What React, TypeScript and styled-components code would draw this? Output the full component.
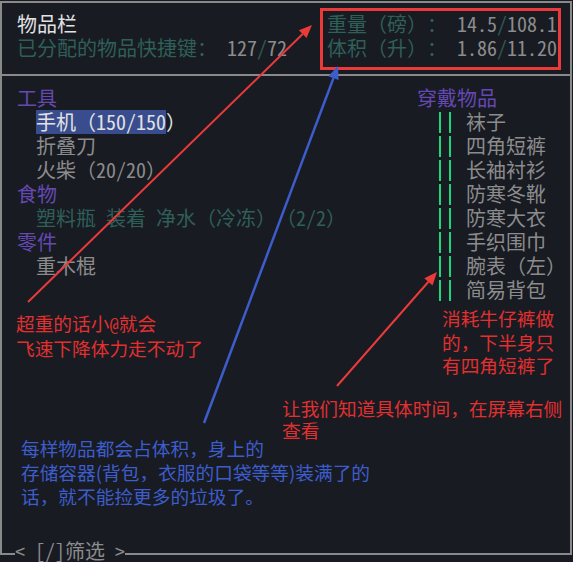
import React from "react";
import styled, { createGlobalStyle } from "styled-components";

const C = {
  bg: "#181b22",
  frame: "#8a8a8a",
  white: "#e2e2e2",
  gray: "#8c8c8c",
  teal: "#2f5f59",
  purple: "#6549b3",
  sel: "#394d8e",
  green: "#1ed679",
  red: "#ea3a3a",
  redText: "#e03030",
  blue: "#3d5dcc",
};

const Global = createGlobalStyle`
  html, body { margin: 0; padding: 0; background: ${C.bg}; }
  body {
    width: 573px; height: 562px; overflow: hidden;
    font-family: "Noto Sans CJK SC", "Noto Sans", sans-serif;
    text-spacing-trim: space-all;
  }
`;

const Screen = styled.div`
  position: relative;
  width: 573px;
  height: 562px;
  overflow: hidden;
  padding-top: 1px;
  box-sizing: border-box;
`;

const Frame = styled.div`
  position: relative;
  width: 572px;
  height: 554px;
  box-sizing: border-box;
  border: 2px solid ${C.frame};
  display: flex;
  flex-direction: column;
  font-size: 20px;
  line-height: 24px;
  color: ${C.gray};
`;

const Header = styled.header`
  display: flex;
  justify-content: space-between;
  align-items: flex-start;
  height: 73px;
  box-sizing: border-box;
  padding: 5px 9px 0 15px;
  border-bottom: 2px solid ${C.frame};
`;

const TitleBlock = styled.div`
  padding-top: 4px;
`;

const Line = styled.div<{ $c?: string }>`
  height: 24px;
  white-space: pre;
  color: ${(p) => p.$c ?? C.gray};
`;

const Num = styled.span<{ $c?: string }>`
  font-feature-settings: "hwid" 1;
  ${(p) => (p.$c ? `color: ${p.$c};` : "")}
`;

const Slash = styled.span`
  color: ${C.teal};
`;

const Label = styled.span`
  color: ${C.teal};
`;

const StatBox = styled.div`
  border: 3px solid ${C.red};
  padding: 1px 1px 7px 4px;
`;

const Body = styled.main`
  display: grid;
  grid-template-columns: 400px 1fr;
  padding: 10px 0 0 15px;
`;

const Column = styled.div`
  display: flex;
  flex-direction: column;
`;

const Category = styled.div`
  height: 24px;
  white-space: pre;
  color: ${C.purple};
`;

const Item = styled.div<{ $c?: string }>`
  height: 24px;
  white-space: pre;
  padding-left: 19px;
  color: ${(p) => p.$c ?? C.gray};
`;

const Sel = styled.span`
  display: inline-block;
  height: 24px;
  background: ${C.sel};
  color: ${C.white};
`;

const WearRow = styled.div`
  display: flex;
  align-items: flex-start;
  height: 24px;
  padding-left: 22px;
  white-space: pre;
`;

const Bar = styled.span`
  display: block;
  width: 2px;
  height: 21px;
  margin-top: 2px;
  margin-right: 8px;
  background: ${C.green};
  & + & {
    margin-right: 15px;
  }
`;

const Legend = styled.div`
  position: absolute;
  left: 13px;
  bottom: -10px;
  height: 24px;
  background: ${C.bg};
  white-space: pre;
  color: ${C.gray};
`;

const Note = styled.div<{ $x: number; $y: number; $lh: number; $c: string }>`
  position: absolute;
  left: ${(p) => p.$x}px;
  top: ${(p) => p.$y}px;
  font-size: 18.7px;
  line-height: ${(p) => p.$lh}px;
  color: ${(p) => p.$c};
  white-space: pre;
`;

const Overlay = styled.svg`
  position: absolute;
  left: 0;
  top: 0;
  pointer-events: none;
`;

type ArrowProps = { x1: number; y1: number; x2: number; y2: number; color: string; w?: number };

function Arrow({ x1, y1, x2, y2, color, w = 2 }: ArrowProps) {
  const dx = x2 - x1;
  const dy = y2 - y1;
  const len = Math.hypot(dx, dy);
  const ux = dx / len;
  const uy = dy / len;
  const L = 13;
  const H = 5.5;
  const bx = x2 - ux * L;
  const by = y2 - uy * L;
  const nx = -uy;
  const ny = ux;
  const pts = `${x2},${y2} ${bx + nx * H},${by + ny * H} ${bx - nx * H},${by - ny * H}`;
  return (
    <g>
      <line x1={x1} y1={y1} x2={bx} y2={by} stroke={color} strokeWidth={w} />
      <polygon points={pts} fill={color} />
    </g>
  );
}

const worn = ["袜子", "四角短裤", "长袖衬衫", "防寒冬靴", "防寒大衣", "手织围巾", "腕表（左）", "简易背包"];

export default function App() {
  return (
    <Screen>
      <Global />
      <Frame>
        <Header>
          <TitleBlock>
            <Line $c={C.white}>物品栏</Line>
            <Line>
              <Label>已分配的物品快捷键：</Label>
              <Num> 127<Slash>/</Slash>72</Num>
            </Line>
          </TitleBlock>
          <StatBox>
            <Line>
              <Label>重量（磅）：</Label>
              <Num> 14.5<Slash>/</Slash>108.1</Num>
            </Line>
            <Line>
              <Label>体积（升）：</Label>
              <Num> 1.86<Slash>/</Slash>11.20</Num>
            </Line>
          </StatBox>
        </Header>
        <Body>
          <Column>
            <Category>工具</Category>
            <Item $c={C.white}>
              <Sel>
                手机（<Num>150/150</Num>
              </Sel>
              ）
            </Item>
            <Item>折叠刀</Item>
            <Item>
              火柴（<Num>20/20</Num>）
            </Item>
            <Category>食物</Category>
            <Item $c={C.teal}>
              塑料瓶<Num> </Num>装着<Num> </Num>净水（冷冻）（<Num>2/2</Num>）
            </Item>
            <Category>零件</Category>
            <Item>重木棍</Item>
          </Column>
          <Column>
            <Category>穿戴物品</Category>
            {worn.map((w) => (
              <WearRow key={w}>
                <Bar />
                <Bar />
                {w}
              </WearRow>
            ))}
          </Column>
        </Body>
        <Legend>
          <Num>&lt; [/]</Num>筛选<Num> &gt;</Num>
        </Legend>
      </Frame>

      <Note $x={16} $y={310} $lh={25} $c={C.redText}>
        超重的话小<Num>@</Num>就会{"\n"}飞速下降体力走不动了
      </Note>
      <Note $x={442} $y={306} $lh={23.5} $c={C.redText}>
        {"消耗牛仔裤做\n的，下半身只\n有四角短裤了"}
      </Note>
      <Note $x={282} $y={397} $lh={22} $c={C.redText}>
        {"让我们知道具体时间，在屏幕右侧\n查看"}
      </Note>
      <Note $x={21} $y={436} $lh={24} $c={C.blue}>
        {"每样物品都会占体积，身上的\n存储容器(背包，衣服的口袋等等)装满了的\n话，就不能捡更多的垃圾了。"}
      </Note>

      <Overlay width={573} height={562} viewBox="0 0 573 562">
        <Arrow x1={28} y1={302} x2={312} y2={25} color={C.red} />
        <Arrow x1={204} y1={423} x2={338} y2={66} color={C.blue} w={2.5} />
        <Arrow x1={337} y1={386} x2={437} y2={272} color={C.red} />
      </Overlay>
    </Screen>
  );
}
